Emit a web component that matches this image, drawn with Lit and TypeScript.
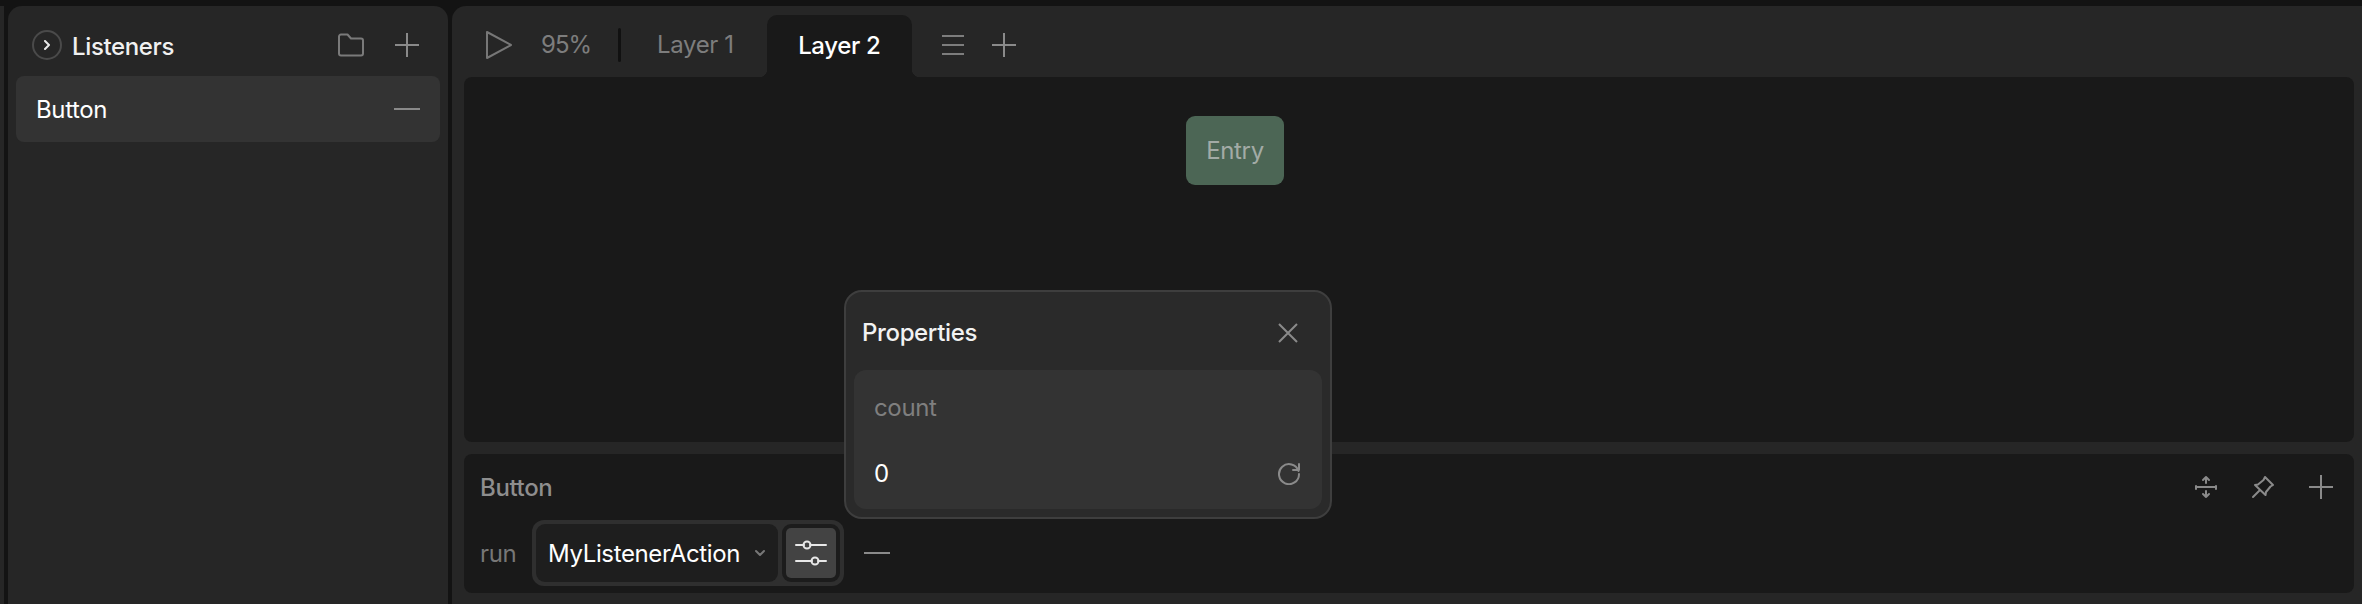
import { LitElement, css, html, svg } from 'lit';
import { customElement } from 'lit/decorators.js';

const icon = (size: number, content: unknown, stroke = '#8a8a8a', width = 2) => html`
  <svg width=${size} height=${size} viewBox="0 0 ${size} ${size}" fill="none" stroke=${stroke}
    stroke-width=${width} stroke-linecap="round" stroke-linejoin="round" aria-hidden="true">${content}</svg>
`;

const plus = (stroke = '#8a8a8a') => icon(26, svg`<path d="M13 1V25M1 13H25" stroke-linecap="butt" />`, stroke);
const minus = icon(26, svg`<path d="M0 13H26" stroke-linecap="butt" />`);

@customElement('app-root')
export class AppRoot extends LitElement {
  static styles = css`
    :host {
      display: block;
      height: 604px;
      overflow: hidden;
      background: #131313;
      font-family: Inter, 'Liberation Sans', sans-serif;
      font-size: 24px;
      letter-spacing: -0.015em;
      color: #fff;
    }

    .page {
      display: flex;
      height: 598px;
      padding-top: 6px;
      gap: 4px;
    }

    .sliver {
      width: 4px;
      background: #262626;
    }

    .side {
      width: 440px;
      background: #262626;
      border-radius: 14px 14px 0 0;
      padding: 0 8px;
      box-sizing: border-box;
    }

    .side-head {
      display: flex;
      align-items: center;
      height: 70px;
      padding: 8px 20px 0 16px;
      box-sizing: border-box;
    }

    .circle {
      width: 30px;
      height: 30px;
      box-sizing: border-box;
      border: 2px solid #4a4a4a;
      border-radius: 50%;
      display: flex;
      align-items: center;
      justify-content: center;
      margin-right: 10px;
    }

    .title {
      flex: 1;
      font-weight: 500;
      padding-top: 2px;
      color: #f0f0f0;
    }

    .folder {
      display: flex;
      margin-right: 29px;
    }

    .item {
      display: flex;
      align-items: center;
      justify-content: space-between;
      height: 66px;
      padding: 0 20px;
      background: #333;
      border-radius: 8px;
    }

    .main {
      flex: 1;
      display: flex;
      flex-direction: column;
      background: #262626;
      border-radius: 14px 0 0 0;
      padding: 0 8px 11px 12px;
      position: relative;
    }

    .tabs {
      display: flex;
      align-items: center;
      height: 71px;
      box-sizing: border-box;
      padding-top: 6px;
      flex: none;
      color: #7d7d7d;
    }

    .play {
      display: flex;
      margin: 0 0 0 21px;
    }

    .zoom {
      margin-left: 28px;
      width: 77px;
      letter-spacing: -0.04em;
    }

    .sep {
      width: 3px;
      height: 34px;
      background: #111;
      border-radius: 2px;
    }

    .tab {
      margin-left: 36px;
    }

    .tab.active {
      position: relative;
      align-self: stretch;
      margin: 3px 0 0 33px;
      width: 145px;
      display: flex;
      align-items: center;
      justify-content: center;
      padding-bottom: 2px;
      box-sizing: border-box;
      background: #191919;
      border-radius: 10px 10px 0 0;
      color: #fff;
      font-weight: 500;
    }

    .tab.active::before,
    .tab.active::after {
      content: '';
      position: absolute;
      bottom: 0;
      width: 8px;
      height: 8px;
    }

    .tab.active::before {
      left: -8px;
      background: radial-gradient(circle at 0 0, #262626 8px, #191919 8.5px);
    }

    .tab.active::after {
      right: -8px;
      background: radial-gradient(circle at 100% 0, #262626 8px, #191919 8.5px);
    }

    .menu {
      display: flex;
      margin-left: 29px;
    }

    .add {
      display: flex;
      margin-left: 26px;
    }

    .canvas {
      position: relative;
      height: 365px;
      flex: none;
      background: #191919;
      border-radius: 8px;
    }

    .node {
      position: absolute;
      left: 722px;
      top: 39px;
      width: 98px;
      height: 69px;
      display: flex;
      align-items: center;
      justify-content: center;
      background: #4c6655;
      border-radius: 9px;
      color: #a3aba6;
    }

    .bottom {
      margin-top: 12px;
      flex: 1;
      background: #191919;
      border-radius: 8px;
      padding: 0 0 0 16px;
    }

    .bottom-head {
      display: flex;
      align-items: center;
      justify-content: space-between;
      height: 66px;
      color: #8e8e8e;
      font-weight: 500;
      padding-right: 20px;
    }

    .tools {
      display: flex;
      align-items: center;
      gap: 33px;
    }

    .tools span {
      display: flex;
    }

    .run {
      display: flex;
      align-items: center;
    }

    .run-label {
      width: 52px;
      color: #777;
    }

    .group {
      display: flex;
      gap: 4px;
      padding: 4px;
      height: 66px;
      width: 312px;
      box-sizing: border-box;
      background: #2f2f2f;
      border-radius: 12px;
      margin-right: 20px;
    }

    .select {
      width: 242px;
      box-sizing: border-box;
      display: flex;
      align-items: center;
      justify-content: space-between;
      padding: 0 12px;
      background: #1e1e1e;
      border-radius: 9px;
    }

    .tune-wrap {
      width: 58px;
      box-sizing: border-box;
      padding: 4px;
      background: #1c1c1c;
      border-radius: 9px;
    }

    .tune {
      height: 100%;
      background: #434343;
      border-radius: 5px;
      display: flex;
      align-items: center;
      justify-content: center;
    }

    .popup {
      position: absolute;
      left: 392px;
      top: 284px;
      width: 488px;
      height: 229px;
      box-sizing: border-box;
      display: flex;
      flex-direction: column;
      padding: 0 8px 8px;
      background: #2a2a2a;
      border: 2px solid #3e3e3e;
      border-radius: 18px;
    }

    .popup-head {
      display: flex;
      align-items: center;
      justify-content: space-between;
      height: 78px;
      flex: none;
      padding: 3px 23px 0 8px;
      box-sizing: border-box;
      font-weight: 500;
      color: #f2f2f2;
    }

    .popup-body {
      flex: 1;
      background: #333;
      border-radius: 12px;
      padding: 0 21px 0 20px;
    }

    .count {
      height: 74px;
      display: flex;
      align-items: center;
      color: #7f7f7f;
    }

    .value {
      height: 58px;
      display: flex;
      align-items: center;
      justify-content: space-between;
    }

    svg {
      display: block;
    }
  `;

  render() {
    return html`
      <div class="page">
        <div class="sliver"></div>
        <aside class="side">
          <div class="side-head">
            <span class="circle">
              ${icon(10, svg`<path d="M3 1L7 5L3 9" />`, '#e8e8e8')}
            </span>
            <span class="title">Listeners</span>
            <span class="folder">
              ${icon(28, svg`<path d="M2 5.5A2 2 0 0 1 4 3.5H10.5L14 7.5H24A2 2 0 0 1 26 9.5V22.5A2 2 0 0 1 24 24.5H4A2 2 0 0 1 2 22.5Z" />`, '#7a7a7a')}
            </span>
            ${plus()}
          </div>
          <div class="item"><span>Button</span>${minus}</div>
        </aside>
        <main class="main">
          <div class="tabs">
            <span class="play">${icon(28, svg`<path d="M2 1V27L26 14Z" />`, '#777')}</span>
            <span class="zoom">95%</span>
            <span class="sep"></span>
            <span class="tab">Layer 1</span>
            <span class="tab active">Layer 2</span>
            <span class="menu">${icon(24, svg`<path d="M1 3H23M1 12H23M1 21H23" stroke-linecap="butt" />`, '#7d7d7d')}</span>
            <span class="add">${plus()}</span>
          </div>
          <div class="canvas"><div class="node">Entry</div></div>
          <section class="bottom">
            <div class="bottom-head">
              <span>Button</span>
              <div class="tools">
                <span>${icon(24, svg`<path d="M2 11V14M22 11V14M2 12H22M12 2V8M9 5L12 2L15 5M12 16V22M9 19L12 22L15 19" />`)}</span>
                <span>${icon(24, svg`<path d="M14 2L22 10L19.5 11.5L15 17L14.5 20L4 10L7 9.5L12.5 5ZM8.5 15.5L2 22" />`)}</span>
                ${plus()}
              </div>
            </div>
            <div class="run">
              <span class="run-label">run</span>
              <div class="group">
                <div class="select">
                  <span>MyListenerAction</span>
                  ${icon(12, svg`<path d="M2 4L6 8L10 4" />`, '#777')}
                </div>
                <div class="tune-wrap">
                  <div class="tune">
                    ${icon(32, svg`<path d="M1 8H9M15 8H31M1 24H17M23 24H31" /><circle cx="12" cy="8" r="3.5" /><circle cx="20" cy="24" r="3.5" />`, '#e8e8e8')}
                  </div>
                </div>
              </div>
              ${minus}
            </div>
          </section>
          <div class="popup">
            <div class="popup-head">
              <span>Properties</span>
              ${icon(22, svg`<path d="M2 2L20 20M20 2L2 20" stroke-linecap="butt" />`)}
            </div>
            <div class="popup-body">
              <div class="count">count</div>
              <div class="value">
                <span>0</span>
                ${icon(24, svg`<path d="M21.5 10A10 10 0 1 0 22 13M22 3V9H16" />`)}
              </div>
            </div>
          </div>
        </main>
      </div>
    `;
  }
}
